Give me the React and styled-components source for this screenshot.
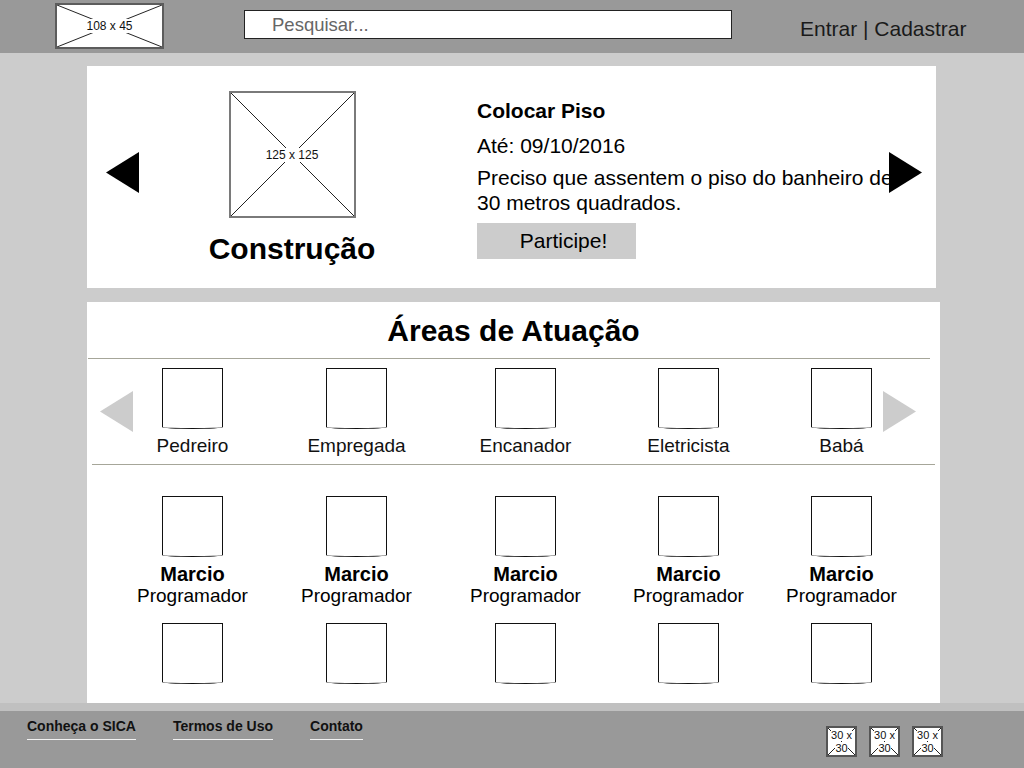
import React from 'react';
import styled, { createGlobalStyle } from 'styled-components';

const GlobalStyle = createGlobalStyle`
  html, body {
    margin: 0;
    padding: 0;
  }
  body {
    background: #cccccc;
    font-family: "Liberation Sans", Arial, sans-serif;
    color: #000;
  }
  * {
    box-sizing: border-box;
  }
`;

const Page = styled.div`
  width: 1024px;
  height: 768px;
  display: flex;
  flex-direction: column;
  overflow: hidden;
`;

const Header = styled.header`
  height: 53px;
  flex-shrink: 0;
  background: #999999;
  display: flex;
  align-items: flex-start;
  padding: 3px 0 0 55px;
`;

const Placeholder = styled.div`
  position: relative;
  width: ${p => p.$w}px;
  height: ${p => p.$h}px;
  flex-shrink: 0;
  background: #fff;
  border: ${p => p.$border};
  display: flex;
  align-items: center;
  justify-content: center;
`;

const Cross = styled.svg`
  position: absolute;
  inset: 0;
  width: 100%;
  height: 100%;
`;

const PlaceholderLabel = styled.span`
  position: relative;
  max-width: 100%;
  font-size: ${p => p.$size}px;
  line-height: ${p => p.$size + 2}px;
  text-align: center;
  color: #111;

  span {
    background: #fff;
  }
`;

const XBox = ({ w, h, label, size = 12, border = '2px solid #5c5c5c' }) => (
  <Placeholder $w={w} $h={h} $border={border}>
    <Cross viewBox="0 0 100 100" preserveAspectRatio="none">
      <line x1="0" y1="0" x2="100" y2="100" stroke="#222" strokeWidth="1" vectorEffect="non-scaling-stroke" />
      <line x1="100" y1="0" x2="0" y2="100" stroke="#222" strokeWidth="1" vectorEffect="non-scaling-stroke" />
    </Cross>
    <PlaceholderLabel $size={size}>
      <span>{label}</span>
    </PlaceholderLabel>
  </Placeholder>
);

const Search = styled.input`
  margin: 7px 0 0 80px;
  width: 488px;
  height: 29px;
  border: 1px solid #222;
  background: #fff;
  padding: 0 0 0 27px;
  font-family: inherit;
  font-size: 18.5px;
  color: #333;
  outline: none;

  &::placeholder {
    color: #666;
  }
`;

const AuthLinks = styled.div`
  margin: 14px 0 0 68px;
  font-size: 21px;
  line-height: 24px;
  color: #1a1a1a;
  white-space: nowrap;
`;

const Main = styled.main`
  flex: 1;
  display: flex;
  flex-direction: column;
  align-items: flex-start;
  gap: 14px;
  padding: 13px 0 0 87px;
`;

const FeaturedPanel = styled.section`
  position: relative;
  width: 849px;
  height: 222px;
  flex-shrink: 0;
  background: #fff;
  display: flex;
  align-items: flex-start;
  padding: 25px 0 0 80px;
`;

const Arrow = styled.svg`
  position: absolute;
  top: ${p => p.$top}px;
  ${p => (p.$side === 'left' ? 'left' : 'right')}: ${p => p.$offset}px;
  width: 33px;
  height: 41px;
`;

const NavArrow = ({ side, top, offset, color }) => (
  <Arrow $side={side} $top={top} $offset={offset} viewBox="0 0 33 41">
    <polygon
      points={side === 'left' ? '0,20.5 33,0 33,41' : '0,0 33,20.5 0,41'}
      fill={color}
    />
  </Arrow>
);

const ImageColumn = styled.div`
  width: 250px;
  display: flex;
  flex-direction: column;
  align-items: center;
`;

const CategoryName = styled.h1`
  margin: 14px 0 0;
  font-size: 30px;
  line-height: 34px;
  font-weight: 700;
`;

const Details = styled.div`
  margin-left: 60px;
  width: 435px;
  padding-top: 8px;
`;

const JobTitle = styled.h3`
  margin: 0;
  font-size: 21px;
  line-height: 24px;
  font-weight: 700;
`;

const Deadline = styled.p`
  margin: 11px 0 0;
  font-size: 21px;
  line-height: 24px;
`;

const Description = styled.p`
  margin: 7px 0 0;
  font-size: 21px;
  line-height: 25px;
`;

const JoinButton = styled.button`
  margin-top: 8px;
  width: 159px;
  height: 36px;
  border: none;
  background: #cccccc;
  font-family: inherit;
  font-size: 21px;
  color: #000;
  padding: 0 0 0 14px;
  cursor: pointer;
`;

const AreasPanel = styled.section`
  width: 853px;
  height: 401px;
  flex-shrink: 0;
  background: #fff;
  display: flex;
  flex-direction: column;
  overflow: hidden;
`;

const AreasTitle = styled.h2`
  margin: 0;
  padding-top: 9px;
  font-size: 30px;
  line-height: 40px;
  font-weight: 700;
  text-align: center;
`;

const Divider = styled.hr`
  margin: ${p => p.$margin};
  height: 1px;
  border: none;
  background: #a6a699;
  flex-shrink: 0;
`;

const Grid = styled.div`
  position: relative;
  display: grid;
  grid-template-columns: 165px 163px 175px 151px 155px;
  row-gap: 16px;
  padding: ${p => p.$padding};
`;

const Cell = styled.div`
  display: flex;
  flex-direction: column;
  align-items: center;
`;

const Thumb = styled.div`
  width: 61px;
  height: 61px;
  border: 1px solid #111;
  border-radius: 0 0 50% 50% / 0 0 2px 2px;
  background: #fff;
`;

const AreaLabel = styled.span`
  margin-top: 6px;
  font-size: 19px;
  line-height: 22px;
  color: #111;
  white-space: nowrap;
`;

const PersonName = styled.span`
  margin-top: 6px;
  font-size: 20px;
  line-height: 22px;
  font-weight: 700;
`;

const PersonRole = styled.span`
  font-size: 19px;
  line-height: 22px;
  white-space: nowrap;
`;

const Footer = styled.footer`
  height: 65px;
  flex-shrink: 0;
  background: #999999;
  border-top: 8px solid #c0c0c0;
  display: flex;
  align-items: flex-start;
  padding: 7px 81px 0 27px;
`;

const FooterNav = styled.nav`
  display: flex;
  gap: 37px;
`;

const FooterLink = styled.a`
  font-size: 14px;
  line-height: 16px;
  font-weight: 700;
  color: #111;
  text-decoration: none;
  padding-bottom: 5px;
  border-bottom: 1px solid #f2f2f2;
`;

const Socials = styled.div`
  margin: 8px 0 0 auto;
  display: flex;
  gap: 12px;
`;

const areas = ['Pedreiro', 'Empregada', 'Encanador', 'Eletricista', 'Babá'];

const people = [
  { name: 'Marcio', role: 'Programador' },
  { name: 'Marcio', role: 'Programador' },
  { name: 'Marcio', role: 'Programador' },
  { name: 'Marcio', role: 'Programador' },
  { name: 'Marcio', role: 'Programador' },
];

export default function App() {
  return (
    <>
      <GlobalStyle />
      <Page>
        <Header>
          <XBox w={109} h={46} label="108 x 45" size={12} />
          <Search placeholder="Pesquisar..." />
          <AuthLinks>Entrar | Cadastrar</AuthLinks>
        </Header>

        <Main>
          <FeaturedPanel>
            <NavArrow side="left" top={86} offset={19} color="#000" />
            <ImageColumn>
              <XBox w={127} h={127} label="125 x 125" size={12} border="2px solid #7a7a7a" />
              <CategoryName>Construção</CategoryName>
            </ImageColumn>
            <Details>
              <JobTitle>Colocar Piso</JobTitle>
              <Deadline>Até: 09/10/2016</Deadline>
              <Description>
                Preciso que assentem o piso do banheiro de 30 metros quadrados.
              </Description>
              <JoinButton>Participe!</JoinButton>
            </Details>
            <NavArrow side="right" top={86} offset={14} color="#000" />
          </FeaturedPanel>

          <AreasPanel>
            <AreasTitle>Áreas de Atuação</AreasTitle>
            <Divider $margin="7px 10px 0 1px" />
            <Grid $padding="9px 0 7px 23px">
              <NavArrow side="left" top={32} offset={13} color="#cccccc" />
              {areas.map(area => (
                <Cell key={area}>
                  <Thumb />
                  <AreaLabel>{area}</AreaLabel>
                </Cell>
              ))}
              <NavArrow side="right" top={32} offset={24} color="#cccccc" />
            </Grid>
            <Divider $margin="0 5px 0 5px" />
            <Grid $padding="31px 0 0 23px">
              {people.map((person, i) => (
                <Cell key={`p${i}`}>
                  <Thumb />
                  <PersonName>{person.name}</PersonName>
                  <PersonRole>{person.role}</PersonRole>
                </Cell>
              ))}
              {people.map((person, i) => (
                <Cell key={`t${i}`}>
                  <Thumb />
                </Cell>
              ))}
            </Grid>
          </AreasPanel>
        </Main>

        <Footer>
          <FooterNav>
            <FooterLink href="#">Conheça o SICA</FooterLink>
            <FooterLink href="#">Termos de Uso</FooterLink>
            <FooterLink href="#">Contato</FooterLink>
          </FooterNav>
          <Socials>
            {[0, 1, 2].map(i => (
              <XBox key={i} w={31} h={31} label="30 x 30" size={11} border="2px solid #555" />
            ))}
          </Socials>
        </Footer>
      </Page>
    </>
  );
}
